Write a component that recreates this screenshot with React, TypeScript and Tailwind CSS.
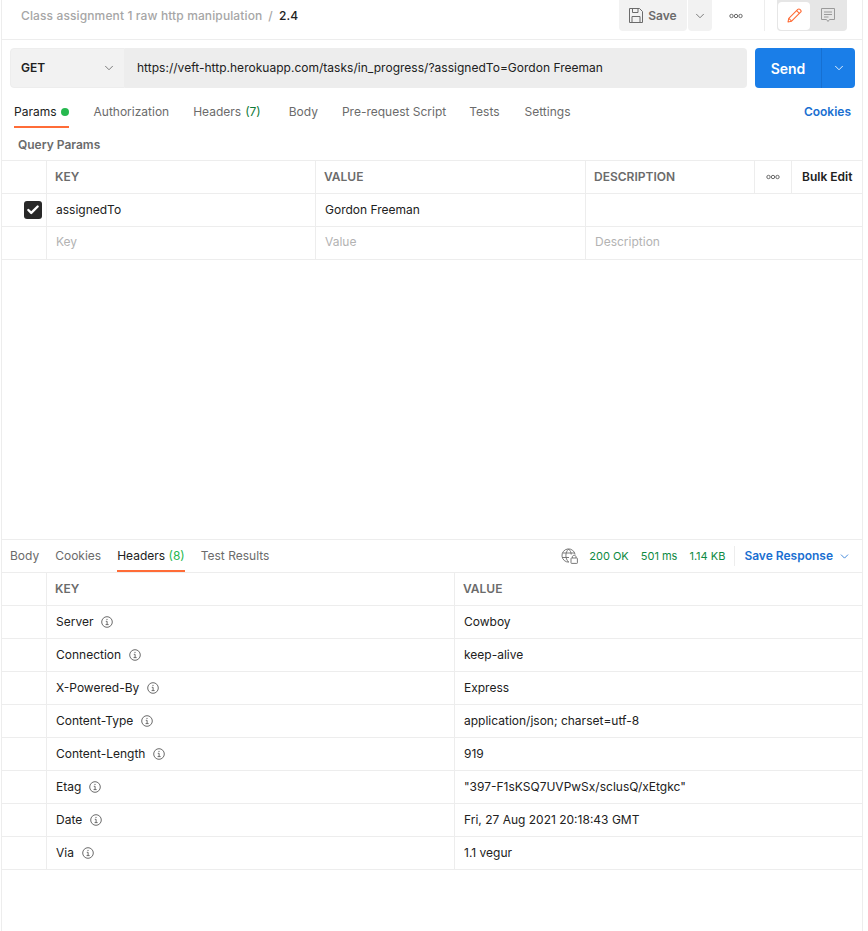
import { ChevronDown, Check } from 'lucide-react';

const font = { fontFamily: 'Inter, "Liberation Sans", sans-serif' };

const reqTabs = [
    { label: 'Authorization', w: 'ml-[25px]' },
    { label: 'Headers', count: '(7)', w: 'ml-[24px]' },
    { label: 'Body', w: 'ml-[28px]' },
    { label: 'Pre-request Script', w: 'ml-[24px]' },
    { label: 'Tests', w: 'ml-[23px]' },
    { label: 'Settings', w: 'ml-[25px]' },
];

const headers = [
    ['Server', 'Cowboy'],
    ['Connection', 'keep-alive'],
    ['X-Powered-By', 'Express'],
    ['Content-Type', 'application/json; charset=utf-8'],
    ['Content-Length', '919'],
    ['Etag', '"397-F1sKSQ7UVPwSx/sclusQ/xEtgkc"'],
    ['Date', 'Fri, 27 Aug 2021 20:18:43 GMT'],
    ['Via', '1.1 vegur'],
];

const Dots = () => (
    <svg width="14" height="6" viewBox="0 0 14 6" fill="none" stroke="#6b6b6b" strokeWidth="1">
        <circle cx="2.5" cy="3" r="1.7" />
        <circle cx="7" cy="3" r="1.7" />
        <circle cx="11.5" cy="3" r="1.7" />
    </svg>
);

const InfoIcon = () => (
    <svg width="12" height="12" viewBox="0 0 12 12" fill="none" stroke="#6b6b6b" strokeWidth="1">
        <circle cx="6" cy="6" r="5.3" />
        <path d="M4.8 5.3H6.1V8.6M4.6 8.6H7.6" />
        <circle cx="6" cy="3.4" r="0.6" fill="#6b6b6b" stroke="none" />
    </svg>
);

const SaveIcon = () => (
    <svg width="14" height="15" viewBox="0 0 14 15" fill="none" stroke="#6b6b6b" strokeWidth="1">
        <path d="M0.5 0.5H10.5L13.5 3.5V14.5H0.5Z" />
        <path d="M3.5 0.5V4.5H9V0.5" />
        <path d="M3 14.5V8.5H11V14.5" />
    </svg>
);

const PencilIcon = () => (
    <svg width="15" height="15" viewBox="0 0 15 15" fill="none" stroke="#ff6c37" strokeWidth="1.1" strokeLinejoin="round">
        <path d="M1 14L1.8 10.4L10.8 1.4C11.4 0.8 12.3 0.8 12.9 1.4L13.6 2.1C14.2 2.7 14.2 3.6 13.6 4.2L4.6 13.2Z" />
        <path d="M9.6 2.6L12.4 5.4" />
        <path d="M1.8 10.4L4.6 13.2" />
    </svg>
);

const CommentIcon = () => (
    <svg width="14" height="15" viewBox="0 0 14 15" fill="none" stroke="#9a9a9a" strokeWidth="1">
        <path d="M0.5 0.5H13.5V11.5H8.5L7 13.5L5.5 11.5H0.5Z" />
        <path d="M3 4H11M3 6.5H11M3 9H7.5" />
    </svg>
);

const GlobeLockIcon = () => (
    <svg width="17" height="16" viewBox="0 0 17 16" fill="none" stroke="#6b6b6b" strokeWidth="0.9">
        <path d="M8 14.1A6.6 6.6 0 1 1 14.1 6.5" />
        <path d="M7.5 1C5.7 3 4.9 5 4.9 7.5C4.9 10 5.7 12 7.5 14" />
        <path d="M7.5 1C9.3 2.6 10.1 4.2 10.2 6.5" />
        <path d="M1.5 5H13.5M1.2 9.5H8" />
        <rect x="10" y="10" width="6.4" height="5.4" rx="0.6" />
        <path d="M11.4 10V8.8C11.4 6.8 15 6.8 15 8.8V10" />
    </svg>
);

const App = () => {
    return (
        <div className="w-[868px] h-[931px] bg-white overflow-hidden" style={font}>
            <div className="ml-[1px] w-[862px] h-full border-x border-[#ededed] flex flex-col text-[12px] text-[#212121]">
                {/* Top bar */}
                <div className="h-[40px] shrink-0 border-b border-[#ededed] flex items-start">
                    <div className="flex items-center h-[31px] pl-[19px] font-medium tracking-[0.12px]">
                        <span className="text-[#a6a6a6]">Class assignment 1 raw http manipulation</span>
                        <span className="text-[#a6a6a6] mx-[6px]">/</span>
                        <span className="text-[#212121]">2.4</span>
                    </div>
                    <div className="ml-auto flex items-center h-[31px] pr-[15px]">
                        <div className="w-[68px] h-[31px] bg-[#f2f2f2] rounded-b-[4px] flex items-center justify-center gap-[5px] text-[#6b6b6b] font-semibold">
                            <SaveIcon />
                            Save
                        </div>
                        <div className="ml-[1px] w-[24px] h-[31px] bg-[#f2f2f2] rounded-b-[4px] flex items-center justify-center">
                            <ChevronDown size={14} color="#6b6b6b" strokeWidth={1.5} />
                        </div>
                        <div className="w-[52px] pr-[4px] flex justify-center">
                            <Dots />
                        </div>
                        <div className="w-px h-[31px] bg-[#ededed] mr-[12px]" />
                        <div className="w-[70px] h-[31px] bg-[#e6e6e6] rounded-b-[4px] flex items-center p-[1px]">
                            <div className="w-[32px] h-[28px] bg-white rounded-[4px] flex items-center justify-center">
                                <PencilIcon />
                            </div>
                            <div className="flex-1 flex justify-center">
                                <CommentIcon />
                            </div>
                        </div>
                    </div>
                </div>

                {/* Request bar */}
                <div className="flex h-[40px] shrink-0 mt-[8px] ml-[8px] mr-[7px]">
                    <div className="w-[115px] bg-[#f2f2f2] border border-[#ededed] rounded-l-[4px] flex items-center justify-between pl-[10px] pr-[8px] font-semibold">
                        GET
                        <ChevronDown size={14} color="#6b6b6b" strokeWidth={1.5} />
                    </div>
                    <div className="w-[622px] bg-[#ededed] rounded-r-[4px] flex items-center pl-[12px] text-[#212121] tracking-[0.02px]">
                        https://veft-http.herokuapp.com/tasks/in_progress/?assignedTo=Gordon Freeman
                    </div>
                    <div className="ml-[8px] flex-1 h-full bg-[#1a7ee8] rounded-[4px] flex text-white">
                        <div className="w-[67px] flex items-center justify-center text-[14px] font-semibold border-r border-[#1670d2]">
                            Send
                        </div>
                        <div className="flex-1 flex items-center justify-center">
                            <ChevronDown size={14} color="#ffffff" strokeWidth={1.5} />
                        </div>
                    </div>
                </div>

                {/* Request tabs */}
                <div className="flex items-start h-[40px] shrink-0 pl-[12px] pr-[11px] text-[#6b6b6b]">
                    <div className="h-[40px] pt-[16px] border-b-2 border-[#ff6c37] flex items-start gap-[4px] text-[#212121] leading-[16px]">
                        Params
                        <span className="w-[8px] h-[8px] rounded-full bg-[#26b84f] mt-[4px]" />
                    </div>
                    {reqTabs.map((tab) => (
                        <div key={tab.label} className={`${tab.w} pt-[16px] leading-[16px]`}>
                            {tab.label}
                            {tab.count && <span className="text-[#0e7a38] ml-[4px]">{tab.count}</span>}
                        </div>
                    ))}
                    <div className="ml-auto pt-[16px] leading-[16px] font-semibold text-[#1a6fd1]">Cookies</div>
                </div>

                {/* Query params */}
                <div className="h-[32px] shrink-0 pl-[16px] pt-[2px] flex items-center font-semibold text-[#6b6b6b]">
                    Query Params
                </div>
                <div className="flex-1 min-h-0 border-t border-[#ededed]">
                    <div className="flex h-[33px] border-b border-[#ededed] items-center font-semibold text-[#6b6b6b]">
                        <div className="w-[45px] h-full border-r border-[#ededed]" />
                        <div className="w-[269px] h-full border-r border-[#ededed] pl-[8px] flex items-center">KEY</div>
                        <div className="w-[270px] h-full border-r border-[#ededed] pl-[8px] flex items-center">VALUE</div>
                        <div className="w-[169px] h-full border-r border-[#ededed] pl-[8px] flex items-center">DESCRIPTION</div>
                        <div className="w-[37px] h-full border-r border-[#ededed] flex items-center justify-center">
                            <Dots />
                        </div>
                        <div className="flex-1 pl-[10px] text-[#212121]">Bulk Edit</div>
                    </div>
                    <div className="flex h-[33px] border-b border-[#ededed] items-center">
                        <div className="w-[45px] h-full border-r border-[#ededed] flex items-center justify-center pl-[19px] pr-[2px]">
                            <span className="w-[18px] h-[18px] shrink-0 bg-[#282828] rounded-[3px] flex items-center justify-center">
                                <Check size={14} color="#ffffff" strokeWidth={4} />
                            </span>
                        </div>
                        <div className="w-[269px] h-full border-r border-[#ededed] pl-[9px] flex items-center">assignedTo</div>
                        <div className="w-[270px] h-full border-r border-[#ededed] pl-[9px] flex items-center">Gordon Freeman</div>
                        <div className="flex-1" />
                    </div>
                    <div className="flex h-[33px] border-b border-[#ededed] items-center text-[#b3b3b3]">
                        <div className="w-[45px] h-full border-r border-[#ededed]" />
                        <div className="w-[269px] h-full border-r border-[#ededed] pl-[9px] pb-[2px] flex items-center">Key</div>
                        <div className="w-[270px] h-full border-r border-[#ededed] pl-[9px] pb-[2px] flex items-center">Value</div>
                        <div className="flex-1 h-full pl-[9px] pb-[2px] flex items-center">Description</div>
                    </div>
                </div>

                {/* Response */}
                <div className="h-[392px] shrink-0 border-t border-[#ededed]">
                    <div className="flex items-start h-[33px] border-b border-[#ededed] pl-[8px] pr-[11px] text-[#6b6b6b]">
                        <div className="pt-[8px] leading-[16px]">Body</div>
                        <div className="ml-[16px] pt-[8px] leading-[16px]">Cookies</div>
                        <div className="ml-[16px] h-[32px] pt-[8px] leading-[16px] border-b-2 border-[#ff6c37] text-[#212121]">
                            Headers <span className="text-[#26b84f]">(8)</span>
                        </div>
                        <div className="ml-[16px] pt-[8px] leading-[16px]">Test Results</div>
                        <div className="ml-auto h-[32px] flex items-center text-[11px] text-[#0e8a43]">
                            <GlobeLockIcon />
                            <span className="ml-[11px]">200 OK</span>
                            <span className="ml-[12px]">501 ms</span>
                            <span className="ml-[12px]">1.14 KB</span>
                            <span className="w-px h-[20px] bg-[#ededed] mx-[9px]" />
                            <span className="text-[12px] font-semibold text-[#1a6fd1]">Save Response</span>
                            <ChevronDown className="ml-[5px]" size={13} color="#1a6fd1" strokeWidth={1.5} />
                        </div>
                    </div>
                    <div className="flex h-[33px] border-b border-[#ededed] font-semibold text-[#6b6b6b]">
                        <div className="w-[45px] border-r border-[#ededed]" />
                        <div className="w-[408px] border-r border-[#ededed] pl-[8px] flex items-center">KEY</div>
                        <div className="flex-1 pl-[8px] flex items-center">VALUE</div>
                    </div>
                    {headers.map(([key, value]) => (
                        <div key={key} className="flex h-[33px] border-b border-[#ededed]">
                            <div className="w-[45px] border-r border-[#ededed]" />
                            <div className="w-[408px] border-r border-[#ededed] pl-[9px] flex items-center gap-[8px]">
                                {key}
                                <InfoIcon />
                            </div>
                            <div className="flex-1 pl-[9px] flex items-center">{value}</div>
                        </div>
                    ))}
                </div>
            </div>
        </div>
    );
};

export default App;
